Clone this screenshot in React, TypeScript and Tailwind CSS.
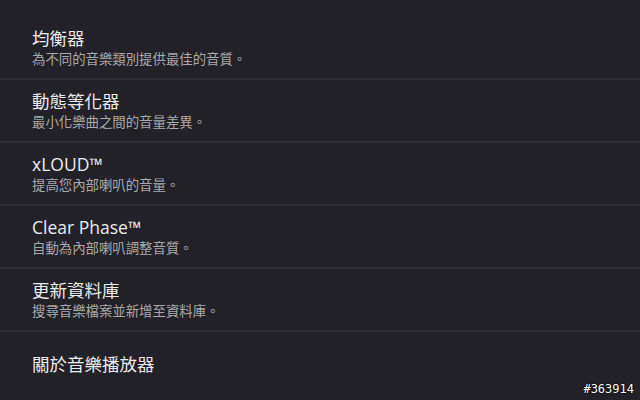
import React from "react";

const items = [
  { title: "均衡器", sub: "為不同的音樂類別提供最佳的音質。" },
  { title: "動態等化器", sub: "最小化樂曲之間的音量差異。" },
  { title: "xLOUD™", sub: "提高您內部喇叭的音量。" },
  { title: "Clear Phase™", sub: "自動為內部喇叭調整音質。" },
  { title: "更新資料庫", sub: "搜尋音樂檔案並新增至資料庫。" },
];

export default function App() {
  return (
    <div
      className="relative w-[640px] h-[400px] overflow-hidden bg-[#222127]"
      style={{ fontFamily: '"Open Sans", "Noto Sans CJK TC", sans-serif' }}
    >
      <div className="pt-[17px]">
        {items.map((it) => (
          <div
            key={it.title}
            className="h-[63px] border-b-2 border-[#2e2d33] px-8 flex flex-col justify-center"
          >
            <div className="text-[17.5px] leading-[22px] text-[#ececec]">{it.title}</div>
            <div className="text-[13.4px] leading-[18px] mt-[1px] text-[#a9a9ab]">{it.sub}</div>
          </div>
        ))}
        <div className="h-[63px] px-8 flex items-center">
          <div className="text-[17.5px] leading-[22px] text-[#ececec]">關於音樂播放器</div>
        </div>
      </div>
      <div
        className="absolute right-[6px] bottom-[4px] text-[12px] leading-[14px] text-white"
        style={{ fontFamily: '"DejaVu Sans Mono", monospace', textShadow: "0 0 2px #000, 0 0 1px #000" }}
      >
        #363914
      </div>
    </div>
  );
}
